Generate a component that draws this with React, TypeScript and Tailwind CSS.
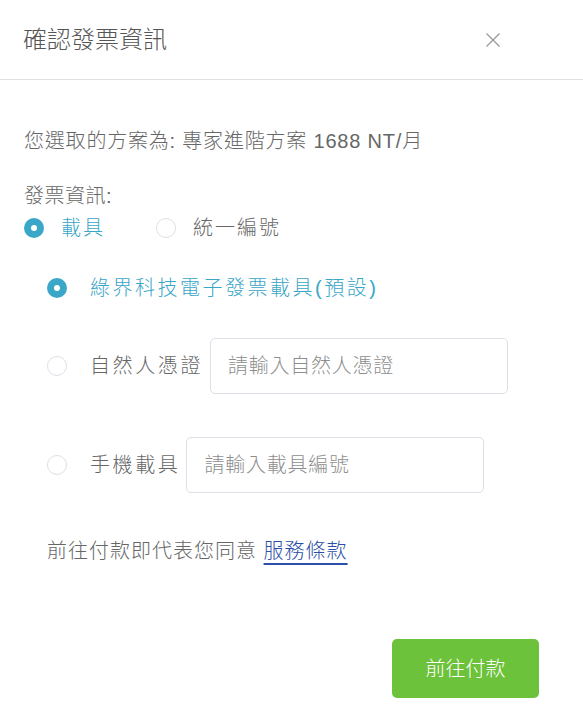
import React from 'react';

const font = { fontFamily: '"Liberation Sans", "Noto Sans CJK TC", sans-serif' };

function Radio({ checked }: { checked?: boolean }) {
  return checked ? (
    <span className="w-[20px] h-[20px] rounded-full bg-[#3aa6c8] flex items-center justify-center shrink-0">
      <span className="w-[6px] h-[6px] rounded-full bg-white" />
    </span>
  ) : (
    <span className="block w-[20px] h-[20px] rounded-full border border-[#dcdfe6] bg-white shrink-0" />
  );
}

export default function App() {
  return (
    <div className="w-[583px] h-[722px] bg-white text-[#666] font-light" style={font}>
      {/* Header */}
      <div className="h-[80px] pl-[23px] flex items-center justify-between border-b border-[#e0e0e0]">
        <h3 className="text-[24px] font-light text-[#555]">確認發票資訊</h3>
        <button className="w-[14px] h-[14px] mr-[83px] text-[#999]">
          <svg viewBox="0 0 14 14" className="w-[14px] h-[14px]" fill="none" stroke="currentColor" strokeWidth="1.3">
            <path d="M0.5 0.5L13.5 13.5M13.5 0.5L0.5 13.5" />
          </svg>
        </button>
      </div>

      {/* Body */}
      <div className="pl-[24px]">
        <p className="mt-[47px] text-[20px] leading-[28px] tracking-[0.8px]">
          您選取的方案為: 專家進階方案 1688 NT/月
        </p>
        <p className="mt-[27px] text-[20px] leading-[28px] tracking-[0.5px]">發票資訊:</p>

        <div className="mt-[4px] flex items-center h-[28px] text-[20px] tracking-[2px]">
          <Radio checked />
          <span className="ml-[17px] text-[#3aa6c8]">載具</span>
          <span className="ml-[51px]"><Radio /></span>
          <span className="ml-[17px]">統一編號</span>
        </div>

        <div className="pl-[23px] text-[20px]">
          <div className="mt-[32px] flex items-center h-[28px] tracking-[2.5px]">
            <Radio checked />
            <span className="ml-[23px] text-[#3aa6c8]">綠界科技電子發票載具(預設)</span>
          </div>

          <div className="mt-[36px] flex items-center h-[56px]">
            <Radio />
            <span className="ml-[23px] tracking-[2.6px]">自然人憑證</span>
            <input
              className="ml-[7px] w-[298px] h-[56px] border border-[#dcdfe6] rounded-[5px] px-[17px] text-[20px] font-light tracking-[0.75px] outline-none placeholder:text-[#8e8e8e]"
              style={font}
              placeholder="請輸入自然人憑證"
            />
          </div>

          <div className="mt-[43px] flex items-center h-[56px]">
            <Radio />
            <span className="ml-[23px] tracking-[2.6px]">手機載具</span>
            <input
              className="ml-[6px] w-[298px] h-[56px] border border-[#dcdfe6] rounded-[5px] px-[17px] text-[20px] font-light tracking-[0.75px] outline-none placeholder:text-[#8e8e8e]"
              style={font}
              placeholder="請輸入載具編號"
            />
          </div>

          <p className="mt-[44px] leading-[28px] tracking-[1px]">
            前往付款即代表您同意{' '}
            <a className="text-[#2b4fa8] underline decoration-[2px] underline-offset-[5px]">服務條款</a>
          </p>
        </div>

        <div className="mt-[74px] flex justify-end pr-[44px]">
          <button className="w-[147px] h-[59px] rounded-[5px] bg-[#6cc23a] text-white text-[20px] font-light">
            前往付款
          </button>
        </div>
      </div>
    </div>
  );
}
